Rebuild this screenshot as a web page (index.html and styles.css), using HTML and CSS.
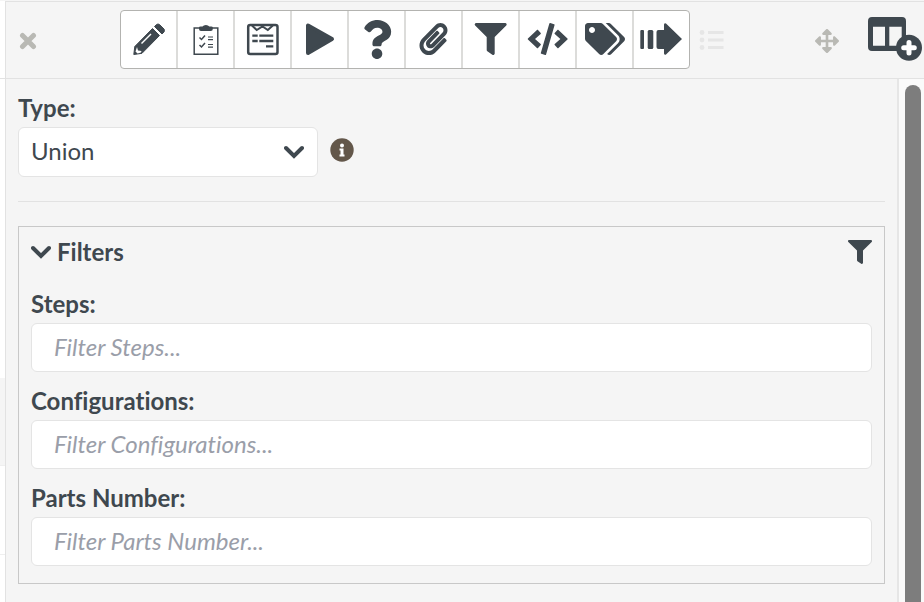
FILE: index.html
```
<!DOCTYPE html>
<html lang="en">
<head>
    <meta charset="UTF-8">
    <meta name="viewport" content="width=device-width, initial-scale=1.0">
    <title>Union Step</title>
    <link rel="stylesheet" href="styles.css">
</head>
<body>
    <div class="page">
        <div class="rows">
            <div class="row head"></div>
            <div class="row tall"></div>
            <div class="row active"></div>
            <div class="row"></div>
        </div>

        <div class="panel">
            <header class="topbar">
                <button class="plain" type="button" aria-label="Close">
                    <svg class="muted" width="18" height="18" viewBox="0 0 18 18"><path d="M3.500 3.500l11 11M14.500 3.500l-11 11" fill="none" stroke="currentColor" stroke-width="5" stroke-linecap="round"/></svg>
                </button>

                <div class="tools">
                    <button type="button" aria-label="Edit">
                        <svg viewBox="0 0 57 59"><path d="M13.800 44.500l1-8L32.500 18.500l7 7L22 43.300z" stroke="currentColor" stroke-linejoin="round"/><path d="M34.500 16.500l2-2q1.500-1 3 0l4.500 4.500q1 1.500 0 3l-2 2z" stroke="currentColor" stroke-linejoin="round"/><path d="M21.500 33.500L31 24" stroke="#fff" stroke-width="1.500"/><path d="M17 37l1 3.500 3.500.5-.5 1.500-3.500 1-2-2z" fill="#fff"/></svg>
                    </button>
                    <button type="button" aria-label="Checklist">
                        <svg viewBox="0 0 57 59"><path d="M17.200 18h23.600v26.300H17.200z" fill="none" stroke="currentColor" stroke-width="1.500"/><path d="M22 17.500q0-1 1.500-1h2q1-1.500 3.400-1.500t3.400 1.500h2q1.500 0 1.500 1v1.500q0 2-2 2H24q-2 0-2-2z"/><path d="M22.500 27.500l2 2 3.500-4M22.500 35l2 2 3.500-4" fill="none" stroke="currentColor" stroke-width="1.500"/><path d="M31 27h5M31 29.700h5M31 34.500h5M31 37.200h5" stroke="currentColor" stroke-width="1.200"/></svg>
                    </button>
                    <button type="button" aria-label="Form">
                        <svg viewBox="0 0 57 59"><rect x="14.200" y="15" width="29.300" height="29" rx="2" fill="none" stroke="currentColor" stroke-width="2.500"/><path d="M18 15.500l4.700 4.500 5.800-3.500 5.300 3.500 5-4.500" fill="none" stroke="currentColor" stroke-width="2"/><path d="M18.300 25.700h5.400M25.300 25.700h14M18.300 31h5.400M25.300 31h14M32 36.300h7.300" stroke="currentColor" stroke-width="2.300"/></svg>
                    </button>
                    <button type="button" aria-label="Run">
                        <svg viewBox="0 0 57 59"><path d="M17 15.500v27.500L41 29z" stroke="currentColor" stroke-width="4" stroke-linejoin="round"/></svg>
                    </button>
                    <button type="button" aria-label="Help">
                        <svg viewBox="0 0 57 59"><path transform="translate(14.400 10) scale(.0762)" d="M202.021 0C122.202 0 70.503 32.703 29.914 91.026c-7.363 10.580-5.093 25.086 5.178 32.874l43.138 32.709c10.373 7.865 25.132 6.026 33.253-4.148 25.049-31.381 43.630-49.449 82.757-49.449 30.764 0 68.816 19.799 68.816 49.631 0 22.552-18.617 34.134-48.993 51.164-35.423 19.860-82.299 44.576-82.299 106.405V320c0 13.255 10.745 24 24 24h72.471c13.255 0 24-10.745 24-24v-5.773c0-42.860 125.268-44.645 125.268-160.627C377.504 66.256 286.902 0 202.021 0zM192 373.459c-38.196 0-69.271 31.075-69.271 69.271 0 38.195 31.075 69.270 69.271 69.270s69.271-31.075 69.271-69.271-31.075-69.270-69.271-69.270z"/></svg>
                    </button>
                    <button type="button" aria-label="Attachments">
                        <svg viewBox="0 0 57 59"><path transform="translate(14.500 13) scale(.0625)" d="M43.246 466.142c-58.430-60.289-57.341-157.511 1.386-217.581L254.392 34c44.316-45.332 116.351-45.336 160.671 0 43.890 44.894 43.943 117.329 0 162.276L232.214 383.128c-29.855 30.537-78.633 30.111-107.982-.998-28.275-29.970-27.368-77.473 1.452-106.953l143.743-146.835c6.182-6.314 16.312-6.422 22.626-.241l22.861 22.379c6.315 6.182 6.422 16.312.241 22.626L171.427 319.927c-4.932 5.045-5.236 13.428-.648 18.292 4.372 4.634 11.245 4.711 15.688.165l182.849-186.851c19.613-20.062 19.613-52.725-.011-72.798-19.189-19.627-49.957-19.637-69.154 0L90.390 293.295c-34.763 35.560-35.299 93.120-1.191 128.313 34.010 35.093 88.985 35.137 123.058.286l172.060-175.999c6.177-6.319 16.307-6.433 22.626-.256l22.877 22.364c6.319 6.177 6.434 16.307.256 22.626l-172.060 175.998c-59.576 60.938-155.943 60.216-214.770-.485z"/></svg>
                    </button>
                    <button type="button" aria-label="Filter">
                        <svg viewBox="0 0 57 59"><path transform="translate(12.700 13) scale(.0625)" d="M487.976 0H24.028C2.710 0-8.047 25.866 7.058 40.971L192 225.941V432c0 7.831 3.821 15.170 10.237 19.662l80 55.980C298.020 518.690 320 507.493 320 487.980V225.941l184.947-184.970C520.021 25.896 509.338 0 487.976 0z"/></svg>
                    </button>
                    <button type="button" aria-label="Code">
                        <svg viewBox="0 0 57 59"><path transform="translate(8.700 13) scale(.0625)" d="M278.900 511.500l-61-17.700c-6.400-1.800-10-8.500-8.200-14.900L346.200 8.700c1.800-6.400 8.500-10 14.900-8.200l61 17.700c6.400 1.800 10 8.500 8.200 14.900L293.800 503.300c-1.900 6.400-8.500 10.100-14.900 8.200zm-114-112.200l43.500-46.400c4.600-4.900 4.300-12.700-.8-17.200L117 256l90.600-79.700c5.100-4.500 5.500-12.300.8-17.200l-43.500-46.400c-4.500-4.800-12.100-5.100-17-.5L3.800 247.200c-5.100 4.700-5.100 12.800 0 17.500l144.100 135.100c4.900 4.600 12.500 4.400 17-.5zm327.200.6l144.100-135.100c5.100-4.700 5.100-12.800 0-17.500L492.100 112.100c-4.800-4.500-12.400-4.300-17 .5L431.600 159c-4.600 4.900-4.300 12.700.8 17.200L523 256l-90.600 79.700c-5.100 4.500-5.500 12.300-.8 17.200l43.500 46.400c4.500 4.900 12.100 5.100 17 .6z"/></svg>
                    </button>
                    <button type="button" aria-label="Tags">
                        <svg viewBox="0 0 57 59"><path transform="translate(9 13) scale(.0625)" d="M497.941 225.941L286.059 14.059A48 48 0 0 0 252.118 0H48C21.490 0 0 21.490 0 48v204.118a48 48 0 0 0 14.059 33.941l211.882 211.882c18.744 18.745 49.136 18.746 67.882 0l204.118-204.118c18.745-18.745 18.745-49.137 0-67.882zM112 160c-26.510 0-48-21.490-48-48s21.490-48 48-48 48 21.490 48 48-21.490 48-48 48zm513.941 133.823L421.823 497.941c-18.745 18.745-49.137 18.745-67.882 0l-.36-.36L527.640 323.522c16.999-16.999 26.362-39.600 26.362-63.640s-9.362-46.641-26.362-63.640L331.397 0h48.721a48 48 0 0 1 33.941 14.059l211.882 211.882c18.745 18.745 18.745 49.137 0 67.882z"/></svg>
                    </button>
                    <button type="button" aria-label="Next step">
                        <svg viewBox="0 0 57 59"><rect x="7.300" y="20" width="3.700" height="19" rx="1"/><rect x="14.700" y="20" width="5.600" height="19" rx="1.500"/><path d="M25.500 20H31v-5.500q.5-2 2-1l16 15.500-16 15.500q-1.500 1-2-1V39h-5.500q-2 0-2-2V22q0-2 2-2z"/></svg>
                    </button>
                </div>

                <button class="plain" type="button" aria-label="List">
                    <svg class="faint" width="26" height="22" viewBox="0 0 26 22"><circle cx="3" cy="3.500" r="2.400"/><circle cx="3" cy="11" r="2.400"/><circle cx="3" cy="18.500" r="2.400"/><path d="M9 3.500h15.500M9 11h15.500M9 18.500h15.500" stroke="currentColor" stroke-width="3" stroke-linecap="butt"/></svg>
                </button>

                <div class="window-tools">
                    <button class="plain" type="button" aria-label="Move">
                        <svg class="muted" width="24" height="24" viewBox="0 0 512 512"><path d="M352.201 425.775l-79.196 79.196c-9.373 9.373-24.568 9.373-33.941 0l-79.196-79.196c-15.119-15.119-4.411-40.971 16.971-40.970h51.162L228 284H127.196v51.162c0 21.382-25.851 32.090-40.971 16.971L7.029 272.937c-9.373-9.373-9.373-24.569 0-33.941L86.225 159.800c15.119-15.119 40.971-4.411 40.971 16.971V228H228V127.196h-51.230c-21.382 0-32.090-25.851-16.971-40.971l79.196-79.196c9.373-9.373 24.568-9.373 33.941 0l79.196 79.196c15.119 15.119 4.411 40.971-16.971 40.971h-51.162V228h100.804v-51.162c0-21.382 25.851-32.090 40.970-16.971l79.196 79.196c9.373 9.373 9.373 24.569 0 33.941L425.773 352.200c-15.119 15.119-40.971 4.411-40.970-16.971V284H284v100.804h51.230c21.382 0 32.090 25.851 16.971 40.971z"/></svg>
                    </button>
                    <button class="plain add-column" type="button" aria-label="Add column">
                        <svg width="54" height="44" viewBox="0 0 54 44"><path fill-rule="evenodd" d="M4 0h30q4 0 4 4v26q0 4-4 4H4q-4 0-4-4V4q0-4 4-4zM5 9.700v19h12v-19zM21.300 9.700v19h12.400v-19z"/><circle cx="41" cy="30.700" r="13"/><path d="M35.700 30.700h10.600M41 25.400v10.600" stroke="#fff" stroke-width="5" stroke-linecap="round"/></svg>
                    </button>
                </div>
            </header>

            <div class="body">
                <main class="content">
                    <label for="type">Type:</label>
                    <div class="type-line">
                        <div class="select">
                            <select id="type">
                                <option>Union</option>
                            </select>
                            <svg width="20" height="14" viewBox="0 0 20 14"><path d="M2 3l8 8 8-8" fill="none" stroke="currentColor" stroke-width="4" stroke-linecap="round"/></svg>
                        </div>
                        <svg class="info" width="24" height="24" viewBox="0 0 24 24"><circle cx="12" cy="12" r="11.700"/><circle cx="12" cy="7.500" r="2" fill="#fff"/><path d="M9.500 10.500h4v6h1v2h-5v-2h1v-4h-1z" fill="#fff"/></svg>
                    </div>

                    <hr>

                    <section class="filters">
                        <div class="filters-head">
                            <button class="plain toggle" type="button" aria-expanded="true">
                                <svg width="20" height="14" viewBox="0 0 20 14"><path d="M2 3l8 8 8-8" fill="none" stroke="currentColor" stroke-width="4" stroke-linecap="round"/></svg>
                                Filters
                            </button>
                            <button class="plain" type="button" aria-label="Apply filters">
                                <svg width="24" height="24" viewBox="0 0 512 512"><path d="M487.976 0H24.028C2.710 0-8.047 25.866 7.058 40.971L192 225.941V432c0 7.831 3.821 15.170 10.237 19.662l80 55.980C298.020 518.690 320 507.493 320 487.980V225.941l184.947-184.970C520.021 25.896 509.338 0 487.976 0z"/></svg>
                            </button>
                        </div>

                        <label for="steps">Steps:</label>
                        <input type="text" id="steps" placeholder="Filter Steps...">

                        <label for="configurations">Configurations:</label>
                        <input type="text" id="configurations" placeholder="Filter Configurations...">

                        <label for="parts">Parts Number:</label>
                        <input type="text" id="parts" placeholder="Filter Parts Number...">
                    </section>
                </main>

                <div class="track">
                    <div class="thumb"></div>
                </div>
            </div>
        </div>
    </div>
</body>
</html>
```
FILE: styles.css
```
* {
    box-sizing: border-box;
}
body {
    font-family: Lato, "Liberation Sans", sans-serif;
    font-size: 24px;
    line-height: 32px;
    font-variant-ligatures: none;
    color: #3f484f;
    background-color: #f5f5f5;
    margin: 0;
}
svg {
    display: block;
    flex: none;
    fill: currentColor;
}
button, select, input {
    font: inherit;
    font-variant-ligatures: none;
    color: inherit;
}
.page {
    display: flex;
    min-height: 100vh;
    padding-top: 1px;
}
.rows {
    width: 5px;
    background-color: #fff;
}
.row {
    height: 89px;
    border-bottom: 1px solid #efefef;
}
.row.head {
    height: 78px;
    border-color: #e2e2e2;
}
.row.tall {
    height: 299px;
    border-bottom: 0;
}
.row.active {
    height: 88px;
    background-color: #f5f5f5;
}
.panel {
    flex: 1;
    display: flex;
    flex-direction: column;
    border-left: 1px solid #e2e2e2;
    border-top: 1px solid #e2e2e2;
}
.topbar {
    display: flex;
    align-items: center;
    height: 77px;
    padding: 0 2px 0 13px;
    border-bottom: 1px solid #e2e2e2;
}
.plain {
    padding: 0;
    border: 0;
    background: none;
}
.muted {
    color: #b9b9b4;
    margin-top: 2px;
}
.faint {
    color: #e6e6e6;
}
.tools {
    display: flex;
    margin: 0 9px 1px 83px;
    border: 1px solid #b3b3b0;
    border-radius: 4px;
    background-color: #fff;
    overflow: hidden;
}
.tools button {
    width: 57px;
    height: 57px;
    padding: 0;
    border: 0;
    background: none;
    border-right: 2px solid #dcdcda;
}
.tools button:last-child {
    width: 55px;
    border-right: 0;
}
.tools svg {
    width: 57px;
    height: 59px;
    margin: -1px;
}
.window-tools {
    display: flex;
    align-items: center;
    gap: 29px;
    margin-left: auto;
}
.add-column {
    margin-bottom: 2px;
}
.body {
    flex: 1;
    display: flex;
}
.content {
    flex: 1;
    padding: 13px 12px 18px;
}
label {
    display: block;
    font-weight: bold;
    margin-bottom: 3px;
}
.type-line {
    display: flex;
    align-items: center;
    gap: 12px;
}
.select {
    position: relative;
    width: 300px;
}
.select select {
    display: block;
    width: 100%;
    height: 50px;
    padding: 0 12px 2px;
    border: 1px solid #e4e4e4;
    border-radius: 6px;
    background-color: #fff;
    appearance: none;
}
.select svg {
    position: absolute;
    top: 18px;
    right: 14px;
    pointer-events: none;
}
.info {
    color: #63574a;
    margin-bottom: 4px;
}
hr {
    margin: 24px 0;
    border: 0;
    border-top: 1px solid #e2e2e2;
}
.filters {
    padding: 9px 12px 17px;
    border: 1px solid #c8c8c8;
}
.filters-head {
    display: flex;
    align-items: center;
    justify-content: space-between;
    margin-bottom: 20px;
}
.toggle {
    display: flex;
    align-items: center;
    gap: 6px;
    font-weight: bold;
}
.filters input {
    display: block;
    width: 100%;
    height: 49px;
    padding: 0 22px 2px;
    border: 1px solid #e4e4e4;
    border-radius: 6px;
    background-color: #fff;
}
.filters input + label {
    margin-top: 13px;
}
.filters input::placeholder {
    color: #9a9ea9;
    font-style: italic;
    opacity: 1;
}
.track {
    width: 27px;
    padding: 6px 3px 0 6px;
    border-left: 2px solid #e6e6e6;
    background-color: #fafafa;
    display: flex;
}
.thumb {
    width: 16px;
    border-radius: 8px 8px 0 0;
    background-color: #7d7d7d;
}
```
